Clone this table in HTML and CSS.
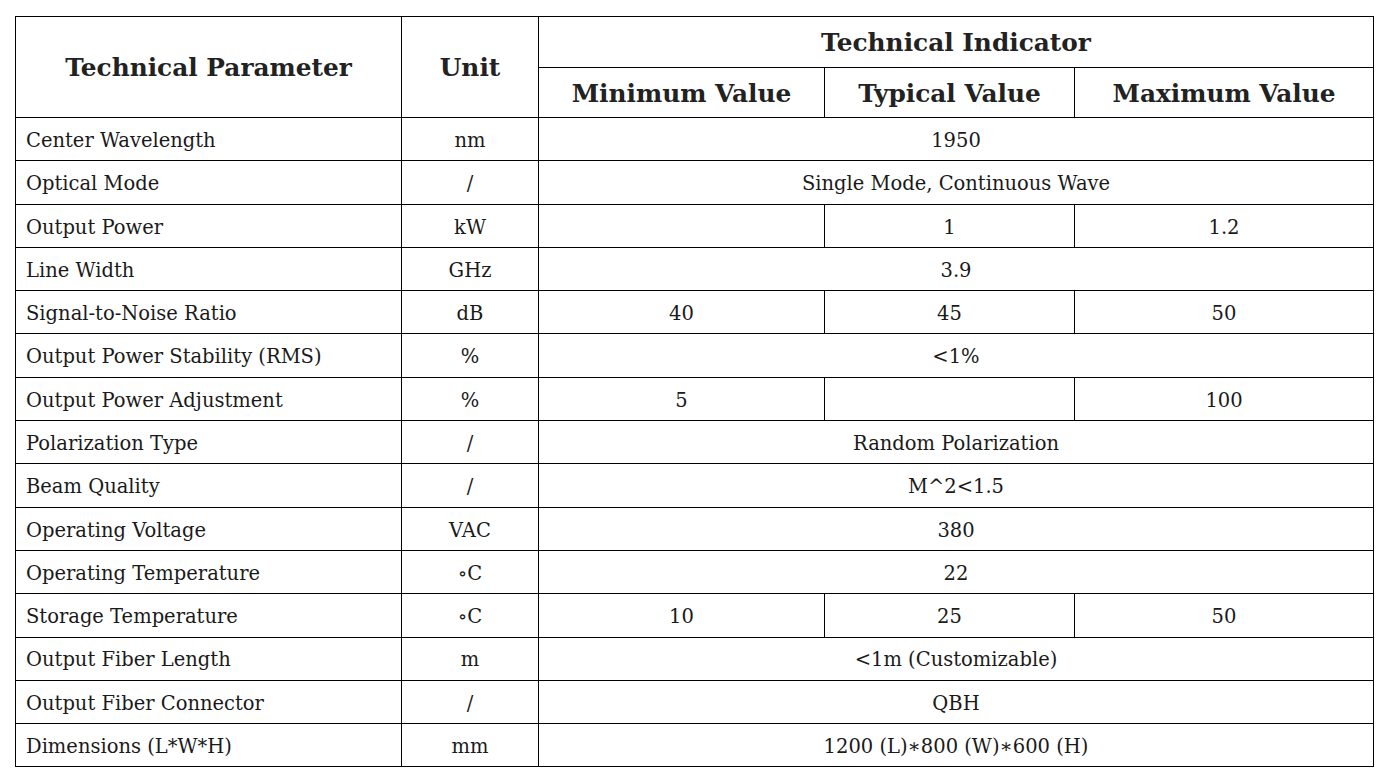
FILE: index.html
```html
<!DOCTYPE html>
<html>
<head>
<meta charset="utf-8">
<link rel="stylesheet" href="styles.css">
</head>
<body>
<table class="spec">
  <colgroup>
    <col class="c-param"><col class="c-unit"><col class="c-min"><col class="c-typ"><col class="c-max">
  </colgroup>
  <thead>
    <tr class="h1">
      <th rowspan="2" class="big">Technical Parameter</th>
      <th rowspan="2" class="big">Unit</th>
      <th colspan="3">Technical Indicator</th>
    </tr>
    <tr class="h2">
      <th>Minimum Value</th>
      <th>Typical Value</th>
      <th>Maximum Value</th>
    </tr>
  </thead>
  <tbody>
    <tr><td class="p">Center Wavelength</td><td>nm</td><td colspan="3">1950</td></tr>
    <tr><td class="p">Optical Mode</td><td>/</td><td colspan="3">Single Mode, Continuous Wave</td></tr>
    <tr><td class="p">Output Power</td><td>kW</td><td></td><td>1</td><td>1.2</td></tr>
    <tr><td class="p">Line Width</td><td>GHz</td><td colspan="3">3.9</td></tr>
    <tr><td class="p">Signal-to-Noise Ratio</td><td>dB</td><td>40</td><td>45</td><td>50</td></tr>
    <tr><td class="p">Output Power Stability (RMS)</td><td>%</td><td colspan="3">&lt;1%</td></tr>
    <tr><td class="p">Output Power Adjustment</td><td>%</td><td>5</td><td></td><td>100</td></tr>
    <tr><td class="p">Polarization Type</td><td>/</td><td colspan="3">Random Polarization</td></tr>
    <tr><td class="p">Beam Quality</td><td>/</td><td colspan="3">M^2&lt;1.5</td></tr>
    <tr><td class="p">Operating Voltage</td><td>VAC</td><td colspan="3">380</td></tr>
    <tr><td class="p">Operating Temperature</td><td>∘C</td><td colspan="3">22</td></tr>
    <tr><td class="p">Storage Temperature</td><td>∘C</td><td>10</td><td>25</td><td>50</td></tr>
    <tr><td class="p">Output Fiber Length</td><td>m</td><td colspan="3">&lt;1m (Customizable)</td></tr>
    <tr><td class="p">Output Fiber Connector</td><td>/</td><td colspan="3">QBH</td></tr>
    <tr><td class="p">Dimensions (L*W*H)</td><td>mm</td><td colspan="3">1200 (L)∗800 (W)∗600 (H)</td></tr>
  </tbody>
</table>
</body>
</html>
```

FILE: styles.css
```css
html, body {
  margin: 0;
  padding: 0;
  background: #ffffff;
}
body {
  padding: 16px 0 0 15px;
  font-family: "DejaVu Serif", "Liberation Serif", serif;
  color: #1a1a1a;
}
.spec {
  border-collapse: collapse;
  table-layout: fixed;
  width: 1359px;
}
.c-param { width: 386px; }
.c-unit { width: 137px; }
.c-min { width: 286px; }
.c-typ { width: 250px; }
.c-max { width: 299px; }

.spec th, .spec td {
  border: 1.3px solid #000;
  padding: 0;
  text-align: center;
  vertical-align: middle;
  white-space: nowrap;
  overflow: hidden;
  line-height: 1.1;
}
.spec thead tr {
  height: 50.5px;
}
.spec tbody tr {
  height: 43.3px;
}
.spec th {
  font-weight: bold;
  font-size: 24.8px;
  color: #222;
  padding-top: 2px;
}
.spec td {
  font-size: 19.5px;
  padding-top: 3px;
}
.spec td.p {
  text-align: left;
  padding-left: 10px;
}
```
